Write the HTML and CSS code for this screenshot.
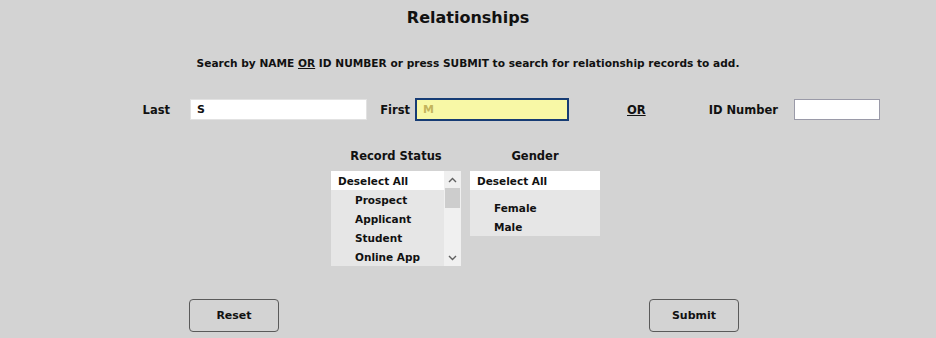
FILE: index.html
```html
<!DOCTYPE html>
<html lang="en">
<head>
  <meta charset="UTF-8" />
  <meta name="viewport" content="width=device-width, initial-scale=1.0"/>
  <title>Relationships</title>
  <link rel="stylesheet" href="styles.css">
</head>
<body>
  <div class="page">
    <h2 class="title">Relationships</h2>
    <p class="hint">Search by NAME <u>OR</u> ID NUMBER or press SUBMIT to search for relationship records to add.</p>

    <div class="search-row">
      <label class="lbl lbl-last" for="last">Last</label>
      <input class="field field-last" type="text" id="last" value="S" />
      <label class="lbl lbl-first" for="first">First</label>
      <input class="field field-first" type="text" id="first" value="M" />
      <span class="lbl lbl-or">OR</span>
      <label class="lbl lbl-id" for="idnum">ID Number</label>
      <input class="field field-id" type="text" id="idnum" />
    </div>

    <div class="lists-row">
      <div class="list-col">
        <div class="list-head">Record Status</div>
        <div class="list-box list-status">
          <div class="list-items">
            <div class="item item-all">Deselect All</div>
            <div class="item">Prospect</div>
            <div class="item">Applicant</div>
            <div class="item">Student</div>
            <div class="item">Online App</div>
          </div>
          <div class="scrollbar">
            <div class="sb-btn">
              <svg width="9" height="6" viewBox="0 0 9 6"><path d="M1 5 L4.5 1.5 L8 5" fill="none" stroke="#606060" stroke-width="1.4"/></svg>
            </div>
            <div class="sb-thumb"></div>
            <div class="sb-track"></div>
            <div class="sb-btn">
              <svg width="9" height="6" viewBox="0 0 9 6"><path d="M1 1 L4.5 4.5 L8 1" fill="none" stroke="#606060" stroke-width="1.4"/></svg>
            </div>
          </div>
        </div>
      </div>
      <div class="list-col">
        <div class="list-head">Gender</div>
        <div class="list-box">
          <div class="list-items">
            <div class="item item-all">Deselect All</div>
            <div class="spacer"></div>
            <div class="item">Female</div>
            <div class="item">Male</div>
          </div>
        </div>
      </div>
    </div>

    <div class="button-row">
      <button type="button">Reset</button>
      <button type="submit">Submit</button>
    </div>
  </div>
</body>
</html>
```

FILE: styles.css
```css
* {
  box-sizing: border-box;
}
body {
  margin: 0;
  background: #d3d3d3;
  font-family: "DejaVu Sans", sans-serif;
  color: #111;
}
.page {
  width: 936px;
  height: 338px;
  overflow: hidden;
}
.title {
  margin: 0;
  height: 35px;
  line-height: 35px;
  text-align: center;
  font-size: 16px;
  font-weight: bold;
}
.hint {
  margin: 18px 0 0;
  height: 20px;
  line-height: 20px;
  text-align: center;
  font-size: 10.6px;
  font-weight: bold;
}
.search-row {
  display: flex;
  align-items: center;
  height: 23px;
  margin-top: 25px;
  padding-left: 130px;
}
.lbl {
  font-size: 11.5px;
  font-weight: bold;
}
.lbl-last {
  width: 40px;
  text-align: right;
  margin-right: 20px;
}
.field {
  height: 21px;
  border: 1px solid #e2e2e2;
  background: #fff;
  font-family: "DejaVu Sans", sans-serif;
  font-size: 11px;
  font-weight: bold;
  padding: 0 6px;
  color: #111;
  outline: none;
}
.field-last {
  width: 177px;
}
.lbl-first {
  width: 43px;
  text-align: right;
  margin-right: 5px;
}
.field-first {
  width: 154px;
  height: 23px;
  background: #f8f8a6;
  border: 2px solid #163c74;
  color: #c4b45c;
}
.lbl-or {
  width: 18px;
  margin-left: 58px;
  text-decoration: underline;
}
.lbl-id {
  width: 133px;
  text-align: right;
  margin-right: 16px;
}
.field-id {
  width: 86px;
  border-color: #9a9aa8;
}
.lists-row {
  display: flex;
  gap: 9px;
  margin-top: 25px;
  padding-left: 331px;
  height: 120px;
}
.list-col {
  width: 130px;
}
.list-head {
  height: 20px;
  line-height: 20px;
  text-align: center;
  font-size: 11.5px;
  font-weight: bold;
  margin-bottom: 5px;
}
.list-box {
  display: flex;
  background: #e6e6e6;
}
.list-items {
  flex: 1;
}
.item {
  height: 19px;
  line-height: 20px;
  padding-left: 24px;
  font-size: 10.5px;
  font-weight: bold;
  white-space: nowrap;
}
.item-all {
  background: #fff;
  padding-left: 7px;
}
.spacer {
  height: 8px;
}
.scrollbar {
  width: 17px;
  display: flex;
  flex-direction: column;
  background: #f0f0f0;
}
.sb-btn {
  height: 17px;
  display: flex;
  align-items: center;
  justify-content: center;
}
.sb-thumb {
  height: 20px;
  margin: 0 1px;
  background: #cdcdcd;
}
.sb-track {
  flex: 1;
}
.button-row {
  display: flex;
  gap: 370px;
  margin-top: 33px;
  padding-left: 189px;
}
button {
  width: 90px;
  height: 33px;
  border: 1px solid #5a5a5a;
  border-radius: 4px;
  background: #d3d3d3;
  font-family: "DejaVu Sans", sans-serif;
  font-size: 11px;
  font-weight: bold;
  color: #111;
  cursor: pointer;
}
```
